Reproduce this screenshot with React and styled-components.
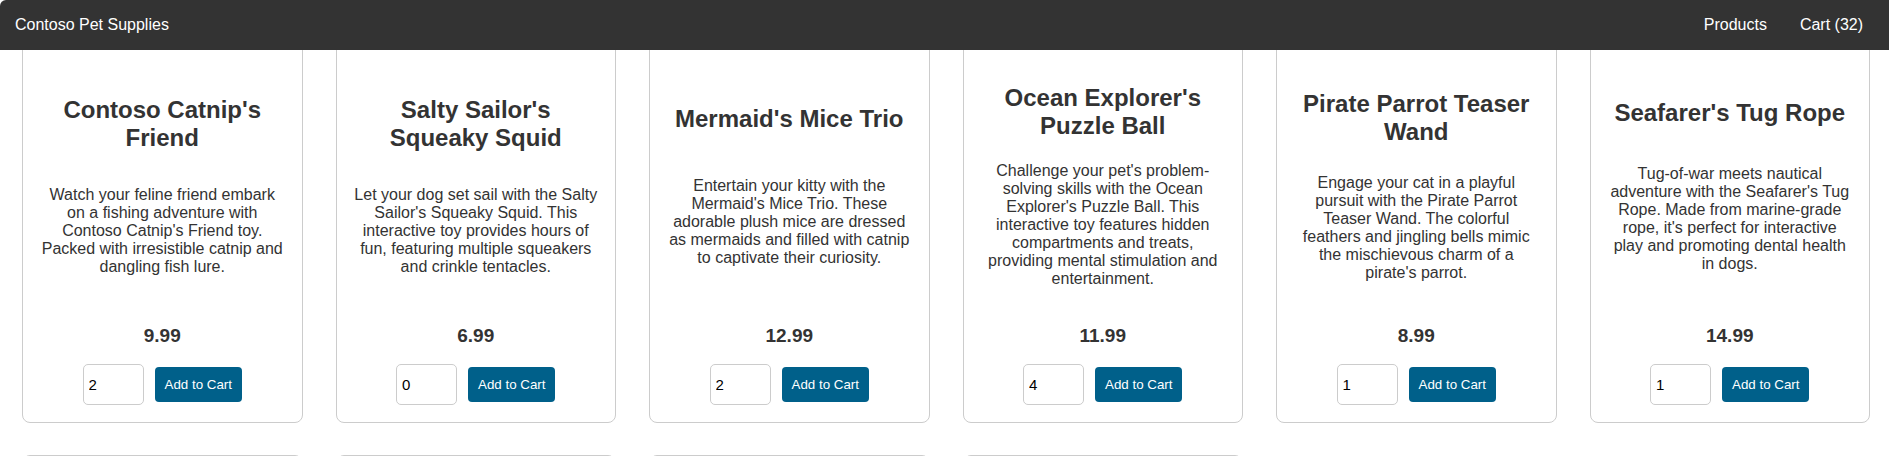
import React, { useState } from 'react';
import styled, { createGlobalStyle } from 'styled-components';

const GlobalStyle = createGlobalStyle`
  html, body {
    margin: 0;
    padding: 0;
    overflow: hidden;
    background: #fff;
    font-family: "Liberation Sans", Arial, sans-serif;
    color: #333;
  }
  * { box-sizing: border-box; }
`;

// --- Header ---
const Header = styled.header`
  position: fixed;
  top: 0;
  left: 0;
  right: 0;
  height: 50px;
  z-index: 10;
  display: flex;
  align-items: center;
  justify-content: space-between;
  padding: 0 26px 0 15px;
  background-color: #333;
  border-top-left-radius: 6px;
  color: #fff;
`;

const Brand = styled.a`
  color: #fff;
  text-decoration: none;
  font-size: 16px;
  line-height: 18px;
`;

const Nav = styled.nav`
  display: flex;
  gap: 33px;
`;

const NavLink = styled.a`
  color: #fff;
  text-decoration: none;
  font-size: 16px;
  line-height: 18px;
`;

// --- Products grid ---
const Grid = styled.main`
  display: grid;
  grid-template-columns: repeat(6, 1fr);
  column-gap: 33px;
  row-gap: 32px;
  padding: 42px 19px 0 22px;
`;

const Card = styled.div`
  height: 381px;
  display: flex;
  flex-direction: column;
  padding: 19px 16px 17px;
  border: 1px solid #ccc;
  border-radius: 8px;
  background: #fff;
  text-align: center;
`;

const Info = styled.div`
  flex: 1;
  display: flex;
  flex-direction: column;
  justify-content: space-evenly;
`;

const Title = styled.h2`
  margin: 0;
  font-size: 24px;
  line-height: 28px;
  font-weight: bold;
  color: #333;
`;

const Description = styled.p`
  margin: 0;
  font-size: 16px;
  line-height: 18px;
  color: #333;
`;

const Price = styled.div`
  margin-top: 15px;
  font-size: 19px;
  line-height: 22px;
  font-weight: bold;
  color: #333;
`;

const Controls = styled.div`
  margin-top: 17px;
  display: flex;
  justify-content: center;
  align-items: center;
  gap: 11px;
`;

const QtyInput = styled.input`
  width: 61px;
  height: 41px;
  padding: 0 5px;
  border: 1px solid #ccc;
  border-radius: 5px;
  font-family: "Liberation Sans", Arial, sans-serif;
  font-size: 15px;
  color: #000;
  outline: none;
`;

const AddButton = styled.button`
  height: 35px;
  padding: 0 10px;
  border: none;
  border-radius: 4px;
  background-color: #00608a;
  color: #fff;
  font-family: "Liberation Sans", Arial, sans-serif;
  font-size: 13.33px;
  cursor: pointer;
`;

const products = [
  {
    name: "Contoso Catnip's Friend",
    description: "Watch your feline friend embark on a fishing adventure with Contoso Catnip's Friend toy. Packed with irresistible catnip and dangling fish lure.",
    price: '9.99',
    qty: 2,
  },
  {
    name: "Salty Sailor's Squeaky Squid",
    description: "Let your dog set sail with the Salty Sailor's Squeaky Squid. This interactive toy provides hours of fun, featuring multiple squeakers and crinkle tentacles.",
    price: '6.99',
    qty: 0,
  },
  {
    name: "Mermaid's Mice Trio",
    description: 'Entertain your kitty with the Mermaid\'s Mice Trio. These adorable plush mice are dressed as mermaids and filled with catnip to captivate their curiosity.',
    price: '12.99',
    qty: 2,
  },
  {
    name: "Ocean Explorer's Puzzle Ball",
    description: "Challenge your pet's problem-solving skills with the Ocean Explorer's Puzzle Ball. This interactive toy features hidden compartments and treats, providing mental stimulation and entertainment.",
    price: '11.99',
    qty: 4,
  },
  {
    name: 'Pirate Parrot Teaser Wand',
    description: "Engage your cat in a playful pursuit with the Pirate Parrot Teaser Wand. The colorful feathers and jingling bells mimic the mischievous charm of a pirate's parrot.",
    price: '8.99',
    qty: 1,
  },
  {
    name: "Seafarer's Tug Rope",
    description: "Tug-of-war meets nautical adventure with the Seafarer's Tug Rope. Made from marine-grade rope, it's perfect for interactive play and promoting dental health in dogs.",
    price: '14.99',
    qty: 1,
  },
  {
    name: "Captain Claw's Crab Cushion",
    description: 'A cozy crab-shaped cushion for naps after a long day at sea.',
    price: '19.99',
    qty: 5,
  },
  {
    name: 'Lighthouse Scratch Post',
    description: 'Keep claws sharp with a sturdy sisal lighthouse scratching post.',
    price: '24.99',
    qty: 6,
  },
  {
    name: 'Anchor Chew Bone',
    description: 'A durable anchor-shaped chew for dogs who love to gnaw.',
    price: '7.99',
    qty: 7,
  },
  {
    name: 'Treasure Chest Treat Box',
    description: 'Hide treats inside this chest and let your pet hunt for gold.',
    price: '10.99',
    qty: 4,
  },
];

const ProductCard = ({ product }) => {
  const [qty, setQty] = useState(String(product.qty));
  return (
    <Card>
      <Info>
        <Title>{product.name}</Title>
        <Description>{product.description}</Description>
      </Info>
      <Price>{product.price}</Price>
      <Controls>
        <QtyInput type="text" value={qty} onChange={e => setQty(e.target.value)} />
        <AddButton>Add to Cart</AddButton>
      </Controls>
    </Card>
  );
};

const App = () => {
  const [cartCount] = useState(32);

  return (
    <>
      <GlobalStyle />
      <Header>
        <Brand href="#">Contoso Pet Supplies</Brand>
        <Nav>
          <NavLink href="#">Products</NavLink>
          <NavLink href="#">Cart ({cartCount})</NavLink>
        </Nav>
      </Header>
      <Grid>
        {products.map(p => (
          <ProductCard key={p.name} product={p} />
        ))}
      </Grid>
    </>
  );
};

export default App;
